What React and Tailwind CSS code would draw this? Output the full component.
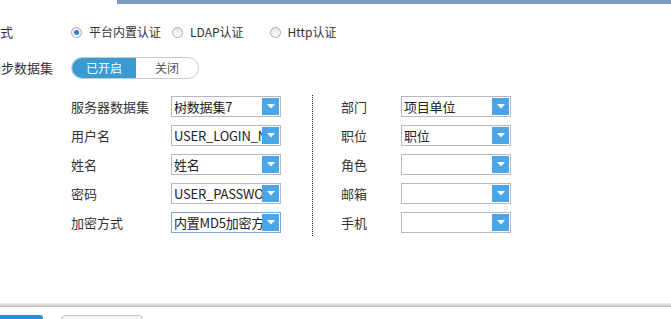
const Radio = ({ checked }) => (
  <span className="relative inline-flex h-[11px] w-[11px] shrink-0 items-center justify-center rounded-full border border-[#a8a8a8] bg-gradient-to-b from-[#e6e6e6] to-white">
    {checked && <span className="h-[5px] w-[5px] rounded-full bg-[#2f7fe0]" />}
  </span>
);

const Select = ({ value, focus }) => (
  <div
    className={`flex h-[21px] w-[110px] items-stretch border bg-white ${
      focus ? "border-[#7eaad8]" : "border-[#b7b7c5]"
    }`}
  >
    <div className="flex-1 overflow-hidden whitespace-nowrap pl-[2px] text-[13px] leading-[19px] tracking-[-0.2px] text-[#222]">
      {value}
    </div>
    <div className="my-[1px] mr-[1px] flex w-[17px] items-center justify-center bg-[#4ba6e8]">
      <svg width="8" height="5" viewBox="0 0 8 5">
        <path d="M0 0 H8 L4 4.5 Z" fill="#fff" />
      </svg>
    </div>
  </div>
);

const Field = ({ label, value, labelW, focus }) => (
  <div className="flex h-[21px] items-center">
    <span className={`${labelW} text-[13px] text-[#333]`}>{label}</span>
    <Select value={value} focus={focus} />
  </div>
);

const left = [
  ["服务器数据集", "树数据集7"],
  ["用户名", "USER_LOGIN_NAME"],
  ["姓名", "姓名"],
  ["密码", "USER_PASSWORD"],
  ["加密方式", "内置MD5加密方式", true],
];

const right = [
  ["部门", "项目单位"],
  ["职位", "职位"],
  ["角色", ""],
  ["邮箱", ""],
  ["手机", ""],
];

export default function App() {
  return (
    <div
      className="relative h-[319px] w-[671px] overflow-hidden bg-white text-[#333]"
      style={{ fontFamily: '"Noto Sans CJK SC", "Noto Sans", sans-serif' }}
    >
      {/* top strip */}
      <div className="ml-[117px] h-[4px] bg-[#7b9ac3]" />

      {/* auth type */}
      <div className="mt-[18px] flex h-[20px] items-center text-[13px]">
        <span className="-ml-[39px] w-[110px] whitespace-nowrap">认证方式</span>
        <label className="flex items-center gap-[7px] text-[12px]">
          <Radio checked />
          <span>平台内置认证</span>
        </label>
        <label className="ml-[11px] flex items-center gap-[7px] text-[12px]">
          <Radio />
          <span>LDAP认证</span>
        </label>
        <label className="ml-[26px] flex items-center gap-[7px] text-[12px]">
          <Radio />
          <span>Http认证</span>
        </label>
      </div>

      {/* sync toggle */}
      <div className="mt-[15px] flex h-[22px] items-center text-[13px]">
        <span className="-ml-[12px] w-[83px] whitespace-nowrap">同步数据集</span>
        <div className="flex h-[22px] w-[128px] overflow-hidden rounded-full border border-[#c9c9c9] text-[12px]">
          <span className="flex w-[64px] items-center justify-center bg-[#3a9ad2] text-white">已开启</span>
          <span className="flex flex-1 items-center justify-center text-[#555]">关闭</span>
        </div>
      </div>

      {/* mapping fields */}
      <div className="mt-[16px] flex pl-[71px]">
        <div className="flex flex-col gap-[8px] pt-[1px]">
          {left.map(([l, v, f]) => (
            <Field key={l} label={l} value={v} focus={f} labelW="w-[100px]" />
          ))}
        </div>
        <div className="ml-[31px] h-[141px] border-l border-dotted border-[#222]" />
        <div className="ml-[28px] flex flex-col gap-[8px] pt-[1px]">
          {right.map(([l, v]) => (
            <Field key={l} label={l} value={v} labelW="w-[60px]" />
          ))}
        </div>
      </div>

      {/* footer */}
      <div className="mt-[67px] h-[4px] bg-gradient-to-b from-[#f2f2f2] to-[#bdbdbd]" />
      <div className="mt-[8px] flex items-start">
        <div className="h-[10px] w-[43px] rounded-tr-[3px] bg-[#2b8ed8]" />
        <div className="ml-[18px] h-[10px] w-[82px] rounded-t-[4px] border border-[#c4c4c4] bg-[#f4f4f4]" />
      </div>
    </div>
  );
}
